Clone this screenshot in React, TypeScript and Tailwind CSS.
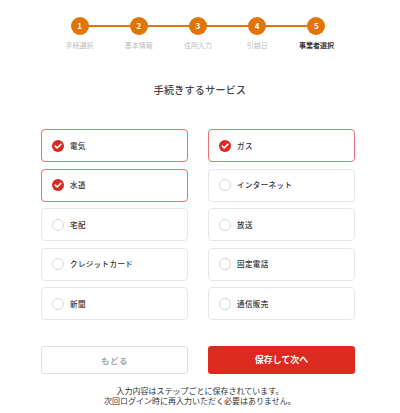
const steps = ["手続選択", "基本情報", "住所入力", "引越日", "事業者選択"];

const services = [
  { label: "電気", checked: true },
  { label: "ガス", checked: true },
  { label: "水道", checked: true },
  { label: "インターネット", checked: false },
  { label: "宅配", checked: false },
  { label: "放送", checked: false },
  { label: "クレジットカード", checked: false },
  { label: "固定電話", checked: false },
  { label: "新聞", checked: false },
  { label: "通信販売", checked: false },
];

function CheckMark() {
  return (
    <svg width="12" height="12" viewBox="0 0 12 12" className="shrink-0">
      <circle cx="6" cy="6" r="6" fill="#d92a1f" />
      <path d="M3.3 6.1 L5.2 8 L8.8 4.3" fill="none" stroke="#fff" strokeWidth="1.7" strokeLinecap="round" strokeLinejoin="round" />
    </svg>
  );
}

export default function App() {
  return (
    <div className="w-[400px] h-[413px] bg-white text-[#333] overflow-hidden" style={{ fontFamily: '"Noto Sans CJK JP", "Noto Sans", sans-serif' }}>
      {/* stepper */}
      <div className="ml-[50px] w-[296px] pt-[17px] grid grid-cols-5">
        {steps.map((s, i) => (
          <div key={s} className="flex flex-col items-center">
            <div className="relative w-full flex justify-center">
              {i > 0 && <div className="absolute left-0 right-1/2 top-[8px] h-[2px] bg-[#e07405]" />}
              {i < steps.length - 1 && <div className="absolute left-1/2 right-0 top-[8px] h-[2px] bg-[#e07405]" />}
              <div className="relative z-10 w-[18px] h-[18px] rounded-full bg-[#e07405] flex items-center justify-center text-white text-[8px] font-bold leading-none">
                {i + 1}
              </div>
            </div>
            <div className={`mt-[6px] text-[7px] leading-[9px] ${i === steps.length - 1 ? "text-[#333] font-bold" : "text-[#bdbdbd]"}`}>
              {s}
            </div>
          </div>
        ))}
      </div>

      <h2 className="mt-[33px] text-center text-[10px] leading-[14px] font-medium tracking-[0.3px] text-[#444]">
        手続きするサービス
      </h2>

      <div className="ml-[41px] w-[314px]">
        <div className="mt-[32px] grid grid-cols-2 gap-x-[20px] gap-y-[6.5px]">
          {services.map((s) => (
            <div
              key={s.label}
              className={`h-[33px] rounded-[4px] border flex items-center pl-[10px] gap-[6px] ${
                s.checked ? "border-[#e57373]" : "border-[#e6e6e6]"
              }`}
            >
              {s.checked ? (
                <CheckMark />
              ) : (
                <div className="w-[12px] h-[12px] rounded-full border border-[#d6d6d6] shrink-0" />
              )}
              <span className="text-[7.5px] leading-none font-medium tracking-[0.4px] text-[#333]">{s.label}</span>
            </div>
          ))}
        </div>

        <div className="mt-[26px] grid grid-cols-2 gap-x-[20px]">
          <button className="h-[28px] rounded-[3px] border border-[#dedede] bg-white text-[8.5px] font-bold text-[#a8a8a8] tracking-[0.5px]">
            もどる
          </button>
          <button className="h-[28px] rounded-[3px] bg-[#dc2a20] text-[9px] font-bold text-white">
            保存して次へ
          </button>
        </div>
      </div>

      <div className="mt-[12px] text-center text-[8px] leading-[10px] text-[#333]">
        <p>入力内容はステップごとに保存されています。</p>
        <p>次回ログイン時に再入力いただく必要はありません。</p>
      </div>
    </div>
  );
}
